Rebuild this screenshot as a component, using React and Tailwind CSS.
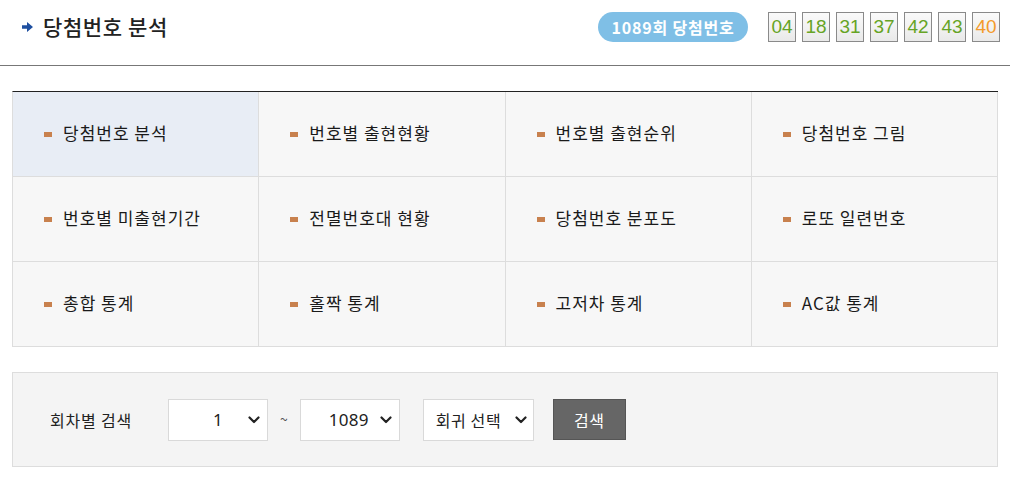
import React from "react";

const font = { fontFamily: '"Noto Sans CJK KR", "Noto Sans", sans-serif' };

const menu = [
  ["당첨번호 분석", "번호별 출현현황", "번호별 출현순위", "당첨번호 그림"],
  ["번호별 미출현기간", "전멸번호대 현황", "당첨번호 분포도", "로또 일련번호"],
  ["총합 통계", "홀짝 통계", "고저차 통계", "AC값 통계"],
];

const nums = [
  ["04", false],
  ["18", false],
  ["31", false],
  ["37", false],
  ["42", false],
  ["43", false],
  ["40", true],
];

function Chevron() {
  return (
    <svg width="12" height="8" viewBox="0 0 12 8" className="shrink-0 ml-auto">
      <path d="M1.5 1.5 L6 6 L10.5 1.5" fill="none" stroke="#222" strokeWidth="2.2" strokeLinecap="round" strokeLinejoin="round" />
    </svg>
  );
}

function Select({ value, pad }) {
  return (
    <div className={`flex items-center w-[100px] h-[42px] bg-white border border-[#d9d9d9] pr-[7px] ${pad}`}>
      <span className="text-[17px] text-[#222] tracking-[0.3px]" style={{ fontFamily: '"Noto Sans", sans-serif' }}>
        {value}
      </span>
      <Chevron />
    </div>
  );
}

export default function App() {
  return (
    <div className="w-[1010px] h-[477px] bg-white overflow-hidden" style={font}>
      <div className="flex items-center justify-between h-[66px] border-b border-[#777] pl-[22px] pr-[10px]">
        <div className="flex items-center gap-[10px] pb-[12px]">
          <svg width="11" height="10" viewBox="0 0 11 10">
            <path d="M0 3.2 H5 V0 L11 5 L5 10 V6.8 H0 Z" fill="#1e4fa0" />
          </svg>
          <span className="text-[21px] font-medium text-[#222] tracking-[0.6px]">당첨번호 분석</span>
        </div>
        <div className="flex items-center pb-[11px]">
          <div className="h-[30px] w-[150px] rounded-full bg-[#7fbfe6] flex items-center justify-center text-white text-[16px] font-bold tracking-[0.8px] mr-[20px]">
            1089회 당첨번호
          </div>
          <div className="flex gap-[6px]">
            {nums.map(([n, bonus]) => (
              <div
                key={n}
                className={`w-[28px] h-[30px] border border-[#8a8a8a] bg-gradient-to-b from-[#fafafa] via-[#f2f2f2] to-[#e9e9e9] flex items-center justify-center text-[19px] ${
                  bonus ? "text-[#f39a2a]" : "text-[#66a425]"
                }`}
                style={{ fontFamily: '"Liberation Sans", Arial, sans-serif' }}
              >
                {n}
              </div>
            ))}
          </div>
        </div>
      </div>

      <div className="mx-[12px] mt-[25px] border-t border-[#222] border-l border-l-[#ddd]">
        {menu.map((row, ri) => (
          <div key={ri} className="grid grid-cols-4">
            {row.map((label, ci) => (
              <div
                key={label}
                className={`h-[85px] border-r border-b border-[#ddd] flex items-center pl-[31px] ${
                  ri === 0 && ci === 0 ? "bg-[#e8edf5]" : "bg-[#f7f7f7]"
                }`}
              >
                <span className="w-[8px] h-[5px] bg-[#c8814e] mr-[11px] mt-[1px]" />
                <span className="text-[17px] text-[#1a1a1a] tracking-[1px] pb-[3px]">{label}</span>
              </div>
            ))}
          </div>
        ))}
      </div>

      <div className="mx-[12px] mt-[25px] h-[95px] bg-[#f4f4f4] border border-[#ddd] flex items-center pl-[37px]">
        <span className="text-[16px] text-[#222] tracking-[0.8px] w-[118px]">회차별 검색</span>
        <Select value="1" pad="pl-[44px]" />
        <span className="mx-[12px] text-[14px] text-[#555]">~</span>
        <Select value="1089" pad="pl-[28px]" />
        <div className="w-[23px]" />
        <div className="flex items-center h-[42px] w-[111px] bg-white border border-[#d9d9d9] pl-[12px] pr-[6px]">
          <span className="text-[16px] text-[#222] tracking-[0.6px]">회귀 선택</span>
          <Chevron />
        </div>
        <div className="w-[19px]" />
        <div className="w-[73px] h-[41px] bg-[#666] border border-[#555] flex items-center justify-center text-white text-[16px] tracking-[0.5px]">
          검색
        </div>
      </div>
    </div>
  );
}
